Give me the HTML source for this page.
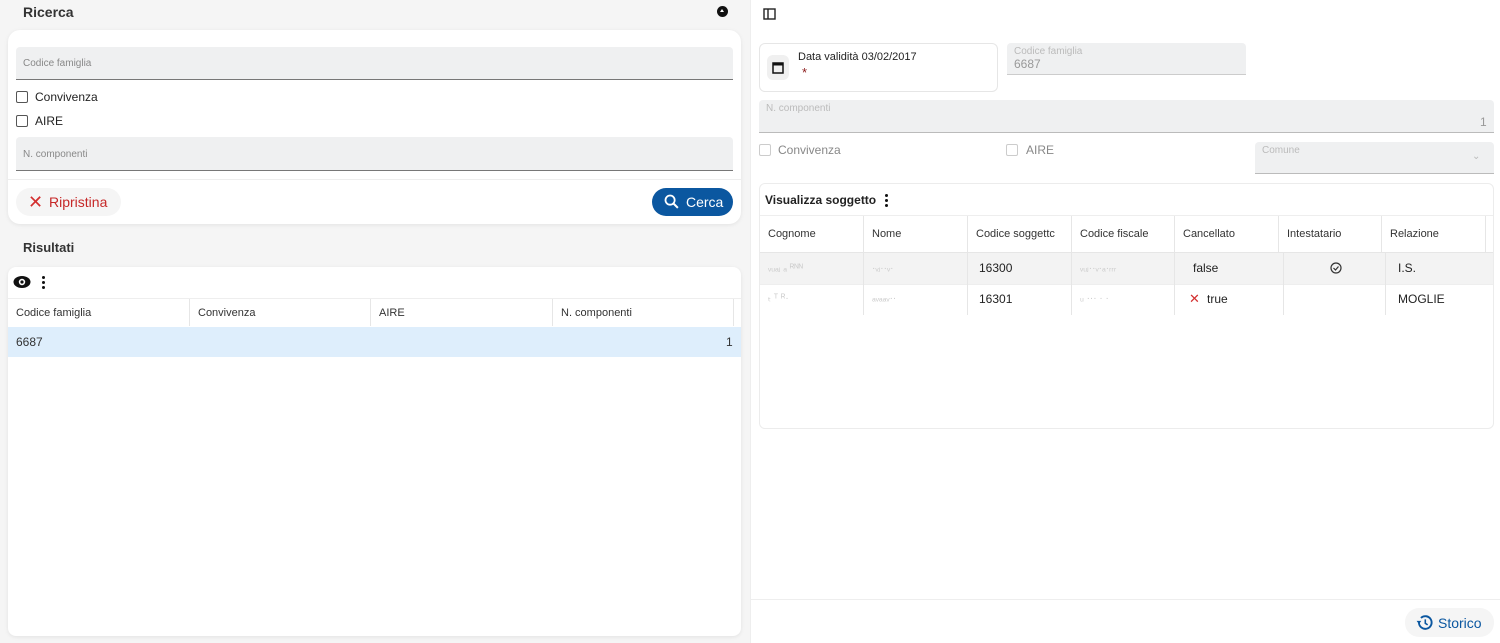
<!DOCTYPE html>
<html><head><meta charset="utf-8"><style>
*{box-sizing:border-box;margin:0;padding:0}
body{width:1500px;height:643px;overflow:hidden;font-family:"Liberation Sans",sans-serif;background:#fff;position:relative;color:#222}
.a{position:absolute}
.left{left:0;top:0;width:750px;height:643px;background:#f5f5f5}
.card{background:#fff;border-radius:12px;box-shadow:0 1px 4px rgba(0,0,0,.08)}
.field{background:#eff0f1;border-bottom:1px solid #777;border-radius:4px 4px 0 0}
.lbl{font-size:10px;color:#888}
.cb{width:12px;height:12px;border:1.5px solid #555;border-radius:2px}
.t{font-size:12px}
.hd{font-size:11px;color:#333}
</style></head><body>
<div class="a left"></div>
<div class="a" style="left:23px;top:4px;font-size:14px;font-weight:bold;color:#333">Ricerca</div>
<div class="a" style="left:717px;top:6px;width:11px;height:11px;border-radius:50%;background:#111"><div class="a" style="left:3px;top:3px;width:0;height:0;border-left:2.5px solid transparent;border-right:2.5px solid transparent;border-bottom:3px solid #fff"></div></div>
<div class="a card" style="left:8px;top:30px;width:733px;height:194px"></div>
<div class="a field" style="left:16px;top:47px;width:717px;height:33px"></div>
<div class="a lbl" style="left:23px;top:58px">Codice famiglia</div>
<div class="a cb" style="left:16px;top:91px"></div><div class="a t" style="left:35px;top:90px">Convivenza</div>
<div class="a cb" style="left:16px;top:115px"></div><div class="a t" style="left:35px;top:114px">AIRE</div>
<div class="a field" style="left:16px;top:137px;width:717px;height:34px"></div>
<div class="a lbl" style="left:23px;top:149px">N. componenti</div>
<div class="a" style="left:8px;top:179px;width:733px;height:1px;background:#eee"></div>
<div class="a" style="left:16px;top:188px;width:105px;height:28px;border-radius:14px;background:#f5f5f5"></div>
<div class="a" style="left:28px;top:193px;color:#d32f2f;font-size:18px;line-height:18px">✕</div>
<div class="a" style="left:49px;top:194px;color:#c62828;font-size:14px">Ripristina</div>
<div class="a" style="left:652px;top:188px;width:81px;height:28px;border-radius:14px;background:#0b57a0"></div>
<svg class="a" style="left:663px;top:193px" width="17" height="17" viewBox="0 0 24 24"><circle cx="10" cy="10" r="6.5" stroke="#fff" stroke-width="2.5" fill="none"/><path d="M15 15l6 6" stroke="#fff" stroke-width="2.8"/></svg>
<div class="a" style="left:686px;top:194px;color:#fff;font-size:14px">Cerca</div>
<div class="a" style="left:23px;top:240px;font-size:13px;font-weight:bold;color:#333">Risultati</div>
<div class="a card" style="left:8px;top:267px;width:733px;height:369px;border-radius:8px"></div>
<svg class="a" style="left:13px;top:275px" width="18" height="14" viewBox="0 0 18 14"><ellipse cx="9" cy="7" rx="8.5" ry="6" fill="#111"/><circle cx="9" cy="7" r="3.2" fill="#fff"/><circle cx="9" cy="7" r="1.6" fill="#111"/></svg>
<div class="a" style="left:42px;top:276px;width:3px;height:3px;border-radius:50%;background:#111;box-shadow:0 5px 0 #111,0 10px 0 #111"></div>
<div class="a" style="left:8px;top:298px;width:733px;height:1px;background:#eee"></div>
<div class="a hd" style="left:16px;top:307px">Codice famiglia</div>
<div class="a hd" style="left:198px;top:307px">Convivenza</div>
<div class="a hd" style="left:379px;top:307px">AIRE</div>
<div class="a hd" style="left:561px;top:307px">N. componenti</div>
<div class="a" style="left:189px;top:299px;width:1px;height:27px;background:#e6e6e6"></div>
<div class="a" style="left:370px;top:299px;width:1px;height:27px;background:#e6e6e6"></div>
<div class="a" style="left:552px;top:299px;width:1px;height:27px;background:#e6e6e6"></div>
<div class="a" style="left:733px;top:299px;width:1px;height:27px;background:#e6e6e6"></div>
<div class="a" style="left:8px;top:327px;width:733px;height:30px;background:#deeefc"></div>
<div class="a t" style="left:16px;top:335px;color:#333">6687</div>
<div class="a t" style="left:726px;top:335px;color:#333">1</div>

<div class="a" style="left:750px;top:0;width:1px;height:643px;background:#eee"></div>
<svg class="a" style="left:763px;top:8px" width="13" height="12" viewBox="0 0 13 12"><rect x="1" y="1" width="11" height="10" fill="none" stroke="#222" stroke-width="1.4"/><path d="M5 1v10" stroke="#222" stroke-width="1.4"/></svg>
<div class="a" style="left:759px;top:43px;width:239px;height:49px;border:1px solid #e6e6e6;border-radius:6px"></div>
<div class="a" style="left:767px;top:55px;width:22px;height:25px;border-radius:6px;background:#f0f0f0"></div>
<svg class="a" style="left:772px;top:61px" width="12" height="13" viewBox="0 0 12 13"><rect x="1" y="2" width="10" height="10" fill="none" stroke="#111" stroke-width="1.5"/><rect x="1" y="2" width="10" height="2.5" fill="#111"/></svg>
<div class="a" style="left:798px;top:51px;font-size:11px">Data validità 03/02/2017</div>
<div class="a" style="left:802px;top:65px;font-size:13px;color:#8b1a1a">*</div>
<div class="a field" style="left:1007px;top:43px;width:239px;height:32px;border-bottom-color:#ccc"></div>
<div class="a lbl" style="left:1014px;top:46px;color:#bbb">Codice famiglia</div>
<div class="a" style="left:1014px;top:57px;font-size:12px;color:#999">6687</div>
<div class="a field" style="left:759px;top:100px;width:735px;height:33px;border-bottom-color:#bbb"></div>
<div class="a lbl" style="left:766px;top:103px;color:#bbb">N. componenti</div>
<div class="a" style="left:1480px;top:115px;font-size:12px;color:#999">1</div>
<div class="a cb" style="left:759px;top:144px;border-color:#ccc"></div><div class="a t" style="left:778px;top:143px;color:#888">Convivenza</div>
<div class="a cb" style="left:1006px;top:144px;border-color:#ccc"></div><div class="a t" style="left:1026px;top:143px;color:#888">AIRE</div>
<div class="a field" style="left:1255px;top:142px;width:239px;height:32px;border-bottom-color:#bbb"></div>
<div class="a lbl" style="left:1262px;top:145px;color:#bbb">Comune</div>
<div class="a" style="left:1472px;top:151px;font-size:10px;color:#bbb">⌄</div>
<div class="a" style="left:759px;top:183px;width:735px;height:246px;border:1px solid #ececec;border-radius:6px"></div>
<div class="a" style="left:765px;top:193px;font-size:12px;font-weight:bold;color:#222">Visualizza soggetto</div>
<div class="a" style="left:885px;top:194px;width:3px;height:3px;border-radius:50%;background:#111;box-shadow:0 5px 0 #111,0 10px 0 #111"></div>
<div class="a" style="left:760px;top:215px;width:733px;height:1px;background:#eee"></div>
<div class="a" style="left:760px;top:252px;width:733px;height:32px;background:#f3f3f3;border-top:1px solid #e6e6e6"></div>
<div class="a" style="left:760px;top:284px;width:733px;height:1px;background:#eee"></div>
<div class="a hd" style="left:768px;top:228px">Cognome</div>
<div class="a hd" style="left:872px;top:228px">Nome</div>
<div class="a hd" style="left:976px;top:228px">Codice soggettc</div>
<div class="a hd" style="left:1080px;top:228px">Codice fiscale</div>
<div class="a hd" style="left:1183px;top:228px">Cancellato</div>
<div class="a hd" style="left:1287px;top:228px">Intestatario</div>
<div class="a hd" style="left:1390px;top:228px">Relazione</div>
<div class="a" style="left:863px;top:216px;width:1px;height:99px;background:#e6e6e6"></div>
<div class="a" style="left:967px;top:216px;width:1px;height:99px;background:#e6e6e6"></div>
<div class="a" style="left:1071px;top:216px;width:1px;height:99px;background:#e6e6e6"></div>
<div class="a" style="left:1174px;top:216px;width:1px;height:99px;background:#e6e6e6"></div>
<div class="a" style="left:1283px;top:252px;width:1px;height:63px;background:#e6e6e6"></div>
<div class="a" style="left:1278px;top:216px;width:1px;height:36px;background:#e6e6e6"></div>
<div class="a" style="left:1381px;top:216px;width:1px;height:36px;background:#e6e6e6"></div>
<div class="a" style="left:1385px;top:252px;width:1px;height:63px;background:#e6e6e6"></div>
<div class="a" style="left:1485px;top:216px;width:1px;height:36px;background:#e6e6e6"></div>
<div class="a" style="left:768px;top:263px;font-size:10px;color:#ccc">ᵥᵤₐⱼ ₐ ᴿᴺᴺ</div>
<div class="a" style="left:872px;top:263px;font-size:10px;color:#ccc">·ᵥⱼ··ᵥ·</div>
<div class="a" style="left:1080px;top:263px;font-size:10px;color:#ccc">ᵥᵤⱼ··ᵥ·ₐ·ᵣᵣᵣ</div>
<div class="a t" style="left:979px;top:261px">16300</div>
<div class="a t" style="left:1193px;top:261px">false</div>
<svg class="a" style="left:1330px;top:262px" width="12" height="12" viewBox="0 0 12 12"><circle cx="6" cy="6" r="5" fill="none" stroke="#333" stroke-width="1.2"/><path d="M3.5 6l2 2 3-3.5" fill="none" stroke="#333" stroke-width="1.2"/></svg>
<div class="a t" style="left:1398px;top:261px">I.S.</div>
<div class="a" style="left:768px;top:293px;font-size:10px;color:#ccc">ₜ ᵀ ᴿ·</div>
<div class="a" style="left:872px;top:293px;font-size:10px;color:#ccc">ₐᵥₐₐᵥ··</div>
<div class="a" style="left:1080px;top:293px;font-size:10px;color:#ccc">ᵤ ··· · ·</div>
<div class="a t" style="left:979px;top:292px">16301</div>
<div class="a" style="left:1189px;top:291px;color:#d32f2f;font-size:13px">✕</div>
<div class="a t" style="left:1207px;top:292px">true</div>
<div class="a t" style="left:1398px;top:292px">MOGLIE</div>
<div class="a" style="left:750px;top:599px;width:750px;height:1px;background:#eee"></div>
<div class="a" style="left:1405px;top:608px;width:89px;height:29px;border-radius:14px;background:#f5f5f5"></div>
<svg class="a" style="left:1415px;top:613px" width="19" height="19" viewBox="0 0 24 24"><path d="M5 12a8 8 0 1 0 2.5-5.8" fill="none" stroke="#0b57a0" stroke-width="2.4"/><path d="M2 10l3 4 3-4z" fill="#0b57a0"/><path d="M13 8v5l3 2" fill="none" stroke="#0b57a0" stroke-width="2"/></svg>
<div class="a" style="left:1438px;top:615px;font-size:14px;color:#0b57a0">Storico</div>
</body></html>
